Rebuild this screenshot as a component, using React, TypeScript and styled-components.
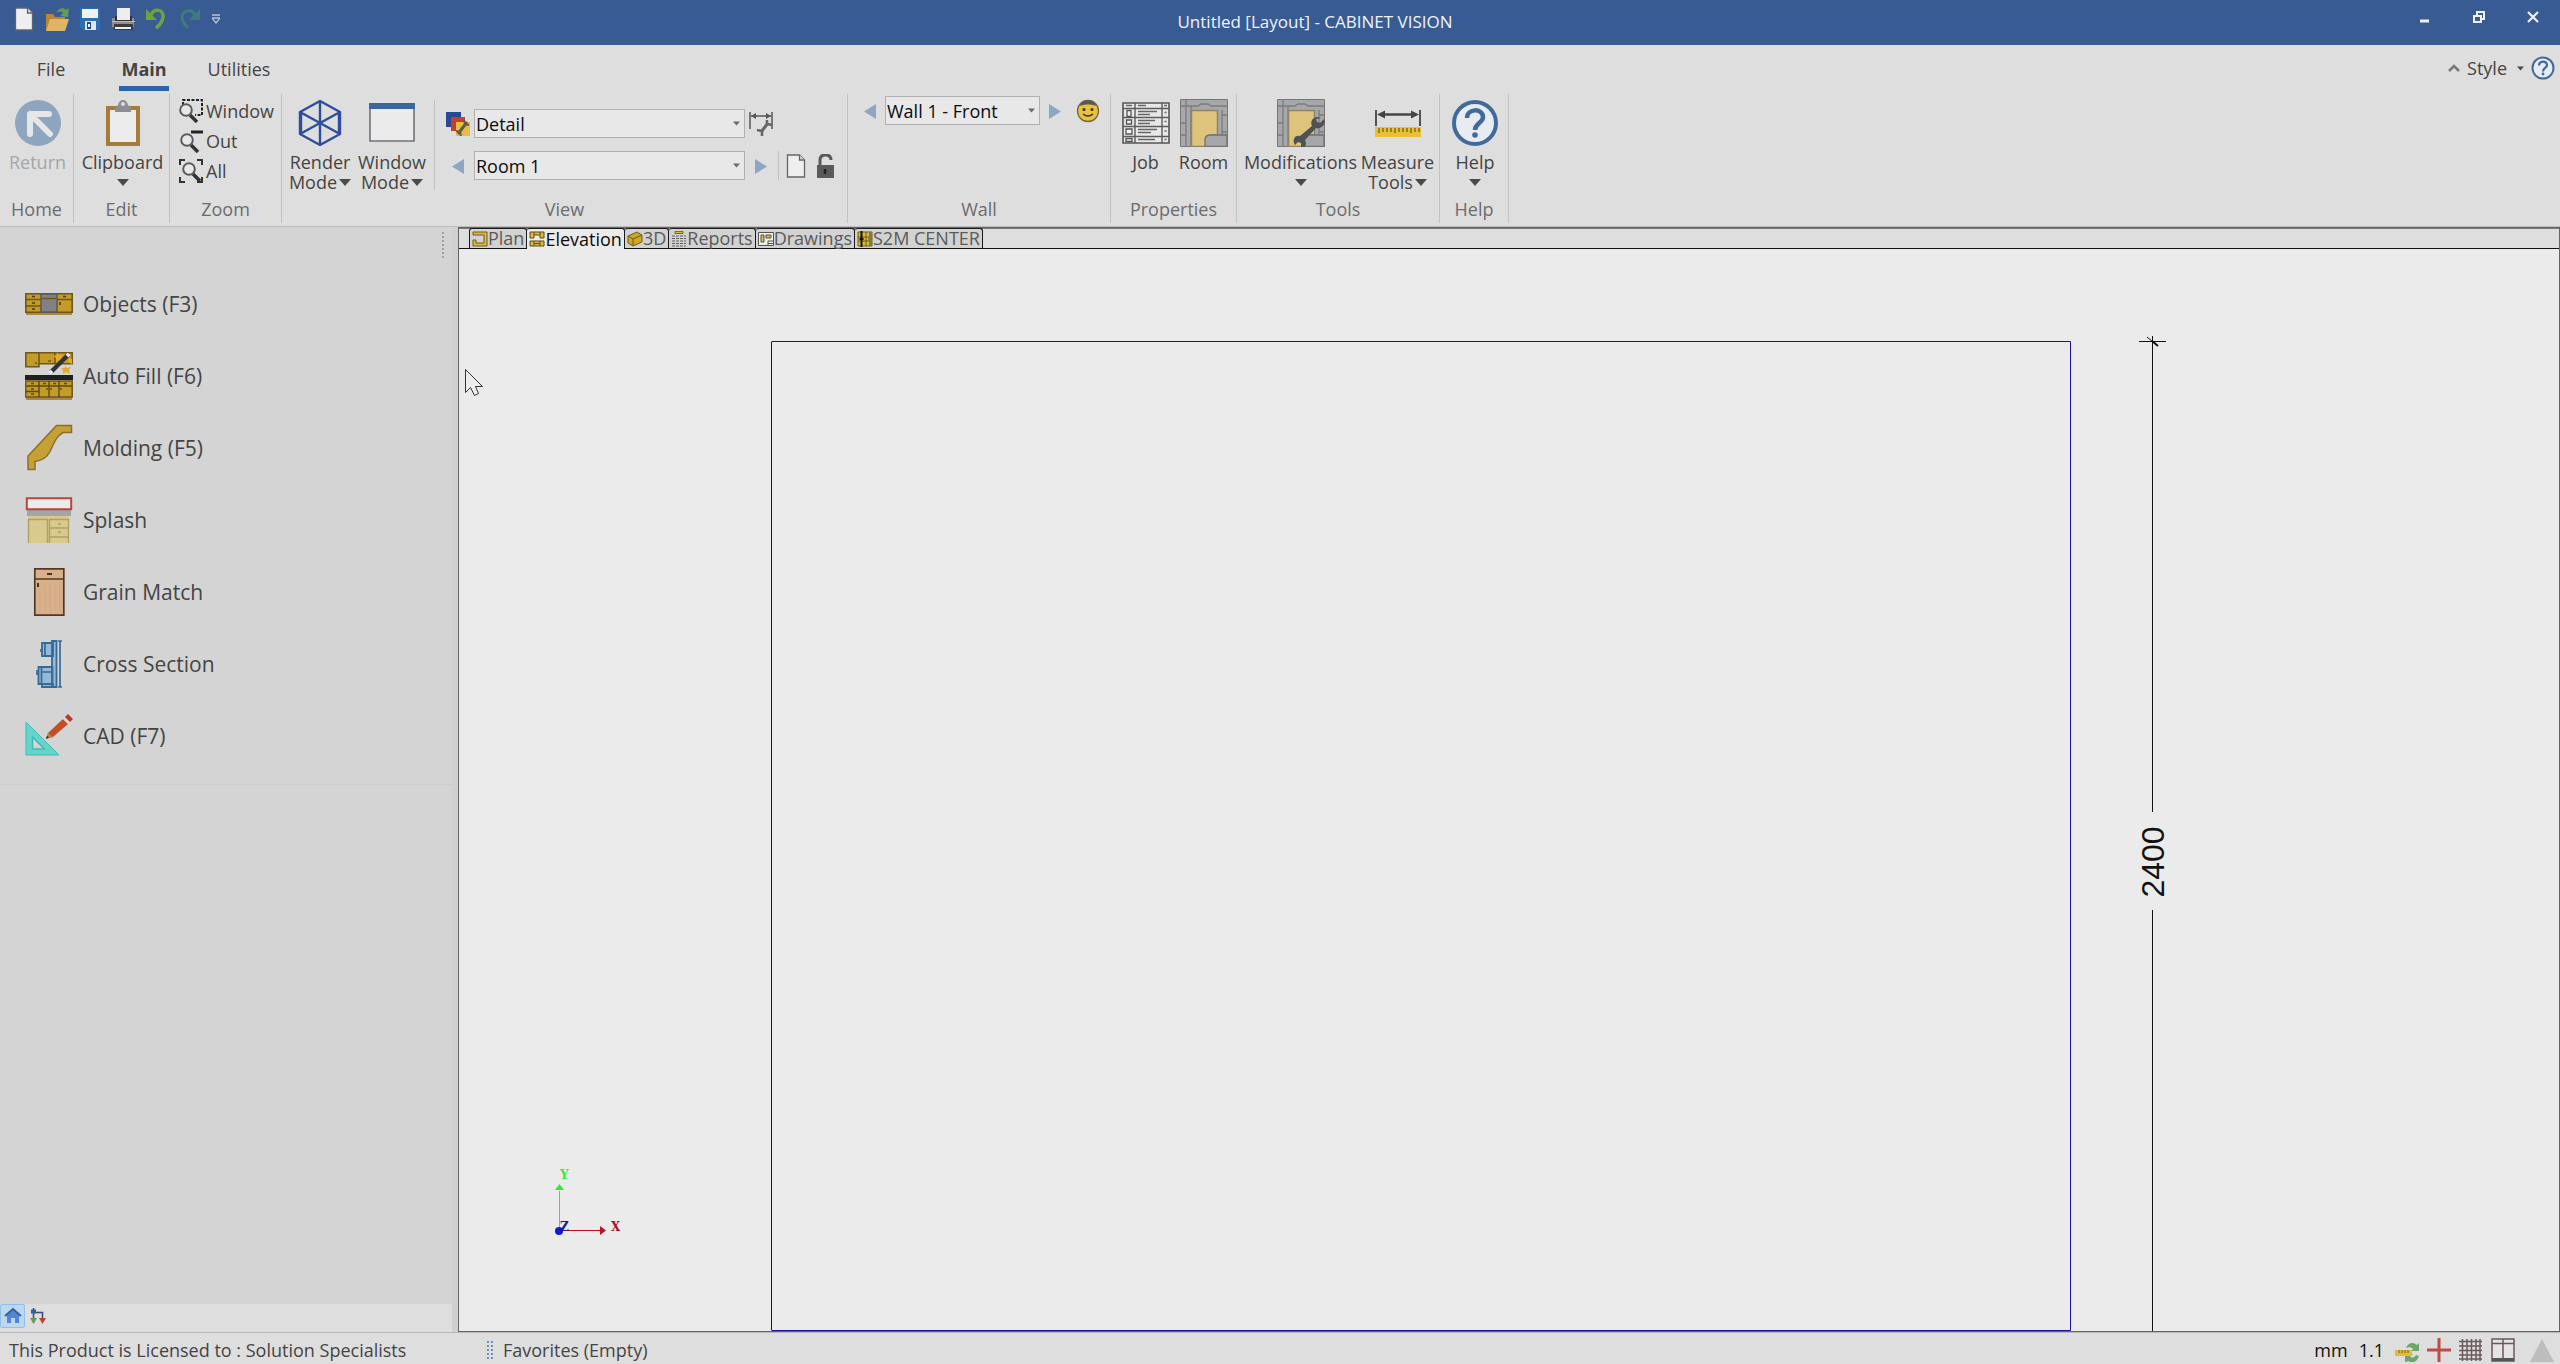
import React from "react";
import styled, { createGlobalStyle } from "styled-components";

const uiFont = '"Open Sans", "Noto Sans", sans-serif';

const GlobalStyle = createGlobalStyle`
  *, *::before, *::after { box-sizing: border-box; }
  body { margin: 0; background: #dedede; overflow: hidden; }
  button, select, a {
    font: inherit; color: inherit; margin: 0; padding: 0;
    border: 0; background: none; text-decoration: none;
  }
  svg { display: block; flex: none; }
`;

const Window = styled.div`
  display: flex;
  flex-direction: column;
  height: 100vh;
  font-family: ${uiFont};
  font-size: 18px;
  line-height: 20px;
  color: #444444;
  background: #dedede;
`;

/* ---------- title bar ---------- */

const TitleBar = styled.header`
  display: flex;
  height: 45px;
  background: #385b93;
  color: #f0f3f8;
`;

const QuickAccess = styled.div`
  display: flex;
  gap: 9px;
  padding: 7px 0 0 12px;
  align-items: flex-start;
`;

const IconButton = styled.button`
  display: flex;
  align-items: center;
  justify-content: center;
  min-width: ${(p: { $size?: number }) => p.$size ?? 24}px;
  height: ${(p) => p.$size ?? 24}px;
`;

const Overflow = styled(IconButton)`
  min-width: 12px;
  width: 12px;
`;

const Title = styled.h1`
  flex: 1;
  margin: 0;
  padding: 12px 0 0 10px;
  text-align: center;
  font-size: 17px;
  font-weight: 400;
  line-height: 20px;
`;

const WindowButtons = styled.div`
  display: flex;
  height: 34px;
  button { width: 54px; display: flex; align-items: center; justify-content: center; }
`;

/* ---------- ribbon ---------- */

const TabRow = styled.nav`
  display: flex;
  height: 46px;
  padding-left: 14px;
`;

const RibbonTab = styled.button<{ $active?: boolean; $width: number }>`
  width: ${(p) => p.$width}px;
  display: flex;
  justify-content: center;
  padding-top: 14px;
  font-weight: ${(p) => (p.$active ? 700 : 400)};
  span {
    height: 32px;
    padding: 0 2px;
    border-bottom: 5px solid ${(p) => (p.$active ? "#2a65ae" : "transparent")};
  }
`;

const TabRowEnd = styled.div`
  display: flex;
  align-items: center;
  margin-left: auto;
  padding: 0 5px 0 0;
  gap: 7px;
`;

const StyleMenu = styled.button`
  display: flex;
  align-items: center;
  gap: 10px;
`;

const Ribbon = styled.div`
  display: flex;
  height: 136px;
  padding: 3px 0;
  border-bottom: 1px solid #bdbdbd;
`;

const Group = styled.section<{ $width: number }>`
  display: flex;
  flex-direction: column;
  min-width: ${(p) => p.$width}px;
  border-right: 1px solid #c2c2c2;
`;

const GroupBody = styled.div<{ $gap?: number }>`
  flex: 1;
  display: flex;
  justify-content: center;
  gap: ${(p) => p.$gap ?? 0}px;
  padding-left: 2px;
`;

const GroupLabel = styled.h2`
  margin: 0 0 4px;
  text-align: center;
  font-size: 18px;
  line-height: 20px;
  font-weight: 400;
  color: #6c6c6c;
`;

const BigButton = styled.button<{ $width?: number; $muted?: boolean }>`
  display: flex;
  flex-direction: column;
  align-items: center;
  justify-content: flex-start;
  width: ${(p) => p.$width ?? 72}px;
  padding-top: 5px;
  white-space: nowrap;
  color: ${(p) => (p.$muted ? "#a4a6a8" : "inherit")};
`;

const BigLabel = styled.span`
  margin-top: 5px;
  text-align: center;
`;

const CaretLine = styled.span`
  display: flex;
  align-items: center;
  justify-content: center;
  gap: 2px;
  height: 20px;
`;

const ZoomColumn = styled.div`
  display: flex;
  flex-direction: column;
  align-items: flex-start;
  flex: 1;
  padding: 2px 0 0 9px;
`;

const SmallButton = styled.button`
  display: flex;
  align-items: center;
  gap: 3px;
  height: 30px;
`;

const ViewGrid = styled.div`
  display: flex;
  flex-direction: column;
  gap: 13px;
  flex: 1;
  margin-left: 6px;
  padding: 15px 0 0 12px;
  position: relative;
  &::before {
    content: "";
    position: absolute;
    left: 0; top: 6px;
    height: 90px;
    border-left: 1px solid #c2c2c2;
  }
`;

const ControlRow = styled.div`
  display: flex;
  align-items: center;
  gap: 4px;
  height: 29px;
`;

const WallRow = styled(ControlRow)`
  margin-top: 2px;
  gap: 5px;
`;

const StepButton = styled(IconButton)`
  min-width: 20px;
  width: 20px;
`;

const PersonButton = styled(IconButton)`
  margin-left: 6px;
`;

const VerticalRule = styled.i`
  height: 29px;
  margin: 0 1px;
  border-left: 1px solid #c2c2c2;
`;

const Combo = styled.label<{ $width: number }>`
  position: relative;
  display: block;
  width: ${(p) => p.$width}px;
  height: 29px;
  color: #0c0c0c;
  select {
    appearance: none;
    width: 100%;
    height: 100%;
    padding: 0 20px 0 1px;
    border: 1px solid #b0b0b0;
    background: #e8e8e8;
  }
  svg { position: absolute; right: 5px; top: 12px; pointer-events: none; }
`;

/* ---------- work area ---------- */

const Workspace = styled.div`
  flex: 1;
  display: flex;
  min-height: 0;
`;

const Sidebar = styled.aside`
  display: flex;
  flex-direction: column;
  width: 452px;
  background: #d4d4d4;
`;

const Divider = styled.div`
  width: 6px;
  background: #d0d0d0;
`;

const Grip = styled.div`
  align-self: flex-end;
  width: 2px;
  height: 26px;
  margin: 5px 8px 0 0;
  background: repeating-linear-gradient(#a4a4a4 0 2px, transparent 2px 4px);
`;

const ToolList = styled.ul`
  list-style: none;
  margin: 0;
  padding: 10px 0 12px;
  border-bottom: 1px solid #cdcdcd;
`;

const ToolButton = styled.button`
  display: flex;
  align-items: center;
  gap: 10px;
  width: 100%;
  height: 72px;
  padding-left: 25px;
  font-size: 21px;
  line-height: 24px;
`;

const SidebarTabs = styled.div`
  display: flex;
  align-items: flex-start;
  gap: 4px;
  height: 28px;
  margin-top: auto;
  background: #dedede;
`;

const SidebarTab = styled.button<{ $active?: boolean }>`
  display: flex;
  align-items: center;
  justify-content: center;
  width: ${(p) => (p.$active ? 25 : 18)}px;
  height: 24px;
  border: 1px solid ${(p) => (p.$active ? "#8fc0ea" : "transparent")};
  border-radius: 2px;
  background: ${(p) => (p.$active ? "#bcd7ee" : "transparent")};
`;

const Frame = styled.main`
  flex: 1;
  display: flex;
  flex-direction: column;
  min-width: 0;
  border: 1px solid #646464;
  background: #ebebeb;
`;

const ViewTabs = styled.div`
  display: flex;
  height: 21px;
  padding-left: 10px;
  background: #dedede;
  box-shadow: inset 0 -1px 0 #111, inset 0 1px 0 #777;
`;

const ViewTab = styled.button<{ $active?: boolean }>`
  display: flex;
  align-items: center;
  height: ${(p) => (p.$active ? 21 : 20)}px;
  padding: 0 2px;
  border: solid #1a1a1a;
  border-width: 1px 1px 0 0;
  border-radius: 3px 3px 0 0;
  &:first-child { border-left-width: 1px; }
  background: ${(p) => (p.$active ? "#ebebeb" : "#d2d2d2")};
  color: ${(p) => (p.$active ? "#0c0c0c" : "#5a5a5a")};
  line-height: 19px;
`;

const Canvas = styled.div`
  flex: 1;
  min-height: 0;
  overflow: hidden;
  svg { width: 100%; height: 100%; }
`;

/* ---------- status bar ---------- */

const StatusBar = styled.footer`
  display: flex;
  align-items: center;
  height: 32px;
  padding: 3px 6px 0 9px;
  border-top: 1px solid #b8b8b8;
`;

const License = styled.span`
  width: 478px;
`;

const DotGrip = styled.i`
  width: 6px;
  height: 18px;
  margin-right: 10px;
  background: radial-gradient(circle at 1px 1px, #6d8fc0 1px, transparent 1px) 0 0 / 4px 4px;
`;

const StatusTools = styled.div`
  display: flex;
  align-items: center;
  gap: 8px;
  margin-left: auto;
  color: #111;
`;

const Readout = styled.span`
  margin-right: 3px;
`;

const AlertButton = styled(IconButton)`
  margin-left: 7px;
`;

/* ---------- glyphs ---------- */

type IconProps = { w?: number; h?: number; box?: string; children: React.ReactNode };
const Icon = ({ w = 24, h = w, box, children }: IconProps) => (
  <svg width={w} height={h} viewBox={box ?? `0 0 ${w} ${h}`} fill="none" aria-hidden="true">
    {children}
  </svg>
);

const Caret = ({ w = 12, h = 7, fill = "#4a4a4a" }) => (
  <Icon w={w} h={h} box="0 0 12 7"><path d="M0 0h12L6 7z" fill={fill} /></Icon>
);

const ArrowGlyph = ({ right }: { right?: boolean }) => (
  <Icon w={20} h={24}>
    <path d={right ? "M4 5v15l12-7.500z" : "M16 5v15L4 12.500z"} fill="#8ea6c4" />
  </Icon>
);

const wrenchPath =
  "M44 19c-3-2-7-1-9 2-1 2-1 4 0 6L23 37c-3-1-5 0-6 3-1 2 0 4 1 6l3-3 3 1 0 4-2 2c4 1 7-2 7-6l-1-3 11-12c3 1 7-1 8-4 1-2 1-4 0-5l-4 4-3-1-1-3z";

const NewIcon = ({ stroke = "#5e6470" }) => (
  <Icon>
    <path d="M3.500 1h12l5 5v17h-17z" fill="#efefef" stroke={stroke} strokeWidth="1.300" />
    <path d="M15.500 1v5h5" fill="#dcdcdc" stroke={stroke} strokeWidth="1.300" />
  </Icon>
);

const OpenIcon = () => (
  <Icon>
    <path d="M1 23V7h7l2 3h10v3z" fill="#bb8634" />
    <path d="M1 24l4-12h19l-4 12z" fill="#dfb466" />
    <path d="M11 6c2-5 8-6 10-3l3-2-1 9-8-1 3-3c-2-2-5-1-7 0z" fill="#629a58" />
  </Icon>
);

const SaveIcon = () => (
  <Icon>
    <path d="M2 1h20v22H5l-3-3z" fill="#2d6db3" />
    <path d="M4 2h16v9H4z" fill="#f2f2f2" />
    <path d="M7 14h11v9H7z" fill="#dfe5ea" />
    <path d="M9 15h4v7H9z" fill="#1d4e8c" />
    <path d="M10 17h2v3h-2z" fill="#f2f2f2" />
  </Icon>
);

const PrintIcon = () => (
  <Icon>
    <path d="M1 11h22v9H1z" fill="#8e8e92" />
    <path d="M4 9h17v6H4z" fill="#333" />
    <path d="M6 1h13v12H6z" fill="#eee" />
    <path d="M3 17h19v6H3z" fill="#3c3c3e" />
    <path d="M4 20h16v2H4z" fill="#eee" />
    <path d="M1 14.500h23" stroke="#bbb" />
  </Icon>
);

const UndoIcon = () => (
  <Icon>
    <path d="M7 8c3-7 13-6 12 2-.5 4-3 8-7 11" stroke="#6da33f" strokeWidth="3.500" />
    <path d="M2 2v11h11z" fill="#6da33f" />
  </Icon>
);

const RedoIcon = () => (
  <Icon>
    <path d="M18 8C15 1 5 3 5 11c.5 4 3 7 6 10" stroke="#3e7c79" strokeWidth="3" />
    <path d="M23 2v11H12z" fill="#3e7c79" />
  </Icon>
);

const ReturnIcon = () => (
  <Icon w={48}>
    <circle cx="24" cy="24" r="23" fill="#8ea5bf" />
    <path d="M35 15H16v20M16 15l20 20" stroke="#e6e6e6" strokeWidth="6" strokeLinecap="round" strokeLinejoin="round" />
  </Icon>
);

const ClipboardIcon = () => (
  <Icon w={48}>
    <path d="M9 9h30v36H9z" fill="#ececec" stroke="#a67c3a" strokeWidth="4" />
    <path d="M16 13V9q0-2 3-2.500Q20 1 24 1t5 5.500Q32 7 32 9v4z" fill="#8c8c92" />
    <circle cx="24" cy="5" r="2" fill="#dedede" />
  </Icon>
);

const Magnifier = () => (
  <>
    <path d="M11 16l7 7" stroke="#333" strokeWidth="3.500" />
    <circle cx="7" cy="11" r="5.800" fill="#e8e8e8" stroke="#5b5b5b" strokeWidth="2" />
  </>
);

const ZoomWindowIcon = () => (
  <Icon>
    <path d="M4 6V1h19v15h-7" stroke="#222" strokeWidth="2" strokeDasharray="3 1.500" />
    <Magnifier />
  </Icon>
);

const ZoomOutIcon = () => (
  <Icon>
    <path d="M12 3h12" stroke="#222" strokeWidth="3" />
    <g transform="translate(1 0)"><Magnifier /></g>
  </Icon>
);

const ZoomAllIcon = () => (
  <Icon>
    <path d="M1 6V1h5M18 1h5v5M23 18v5h-5M6 23H1v-5" stroke="#333" strokeWidth="2" />
    <g transform="translate(3 -1)"><Magnifier /></g>
  </Icon>
);

const RenderIcon = () => (
  <Icon w={48}>
    <path
      d="M24 2l20 11v22L24 46 4 35V13zM24 2v22M4 13l20 11 20-11M24 22v24M4 35l20-11 20 11M5 14v20M43 14v20"
      stroke="#2e4d9b" strokeWidth="2.400" strokeLinejoin="round"
    />
  </Icon>
);

const WindowIcon = () => (
  <Icon w={48}>
    <path d="M2 5h44v37H2z" fill="#ebebeb" stroke="#6e7277" strokeWidth="1.600" />
    <path d="M1 4h46v6H1z" fill="#3c679c" />
  </Icon>
);

const LayersIcon = () => (
  <Icon>
    <path d="M0 0h15v15H0z" fill="#264a92" />
    <path d="M5 5h14v14H5z" fill="#c2402f" />
    <path d="M10 10h14v14H10z" fill="#e8bd43" />
    <path d="M12 22l9-12" stroke="#5f5c4e" strokeWidth="3" />
    <path d="M18 8l1 4 4 1M10 19l4 1 1 4" stroke="#5f5c4e" strokeWidth="2" />
  </Icon>
);

const DimensionIcon = () => (
  <Icon>
    <path d="M1 0v17M23 0v17M2 4h20" stroke="#555" strokeWidth="1.500" />
    <path d="M2 4l5-3v6zM22 4l-5-3v6z" fill="#555" />
    <path d="M12 20l7-9" stroke="#666" strokeWidth="3" />
    <path d="M18 8v4l5 1M8 18l5 1v5" stroke="#666" strokeWidth="2.600" />
  </Icon>
);

const LockIcon = () => (
  <Icon>
    <path d="M5 11h17v13H5z" fill="#5a5a5a" />
    <path d="M8 11V6q0-5 5.500-5T19 6" stroke="#5a5a5a" strokeWidth="3" />
    <path d="M13 15v5" stroke="#222" strokeWidth="2.500" />
  </Icon>
);

const SmileyIcon = () => (
  <Icon>
    <circle cx="12" cy="12" r="10.500" fill="#e9c13c" stroke="#77683a" strokeWidth="1.300" />
    <path d="M4 7c1-8 15-8 16 0-5-2-11-2-16 0z" fill="#5a5a55" />
    <circle cx="8" cy="10.500" r="1.500" fill="#333" />
    <circle cx="16" cy="10.500" r="1.500" fill="#333" />
    <path d="M7 15q5 4 10 0" stroke="#333" strokeWidth="1.400" />
  </Icon>
);

const JobIcon = () => (
  <Icon w={48}>
    <path d="M1 4h46v40H1z" fill="#e8e8e8" stroke="#555" strokeWidth="1.600" />
    <path d="M1 9.500h46M1 18.500h46M1 27.500h46M1 37.500h46M13 4v40M40 4v40" stroke="#5c5c5c" strokeWidth="1.400" />
    <path d="M4 6.500h6M16 6.500h8M42 6.500h3M16 12.500h19M16 15.500h12M16 21.500h17M16 24.500h12M16 30.500h19M16 33.500h13M16 40.500h17M42.500 13.500h2M42.500 22.500h2M42.500 32h2M42.500 40.500h2" stroke="#666" strokeWidth="1.400" />
    <path d="M5 11.500h4v6H5zM4.500 21h5v4h-5zM4 30h6v5H4zM4 39.500h6v3H4z" fill="#f2f2f2" stroke="#555" strokeWidth="1.300" />
  </Icon>
);

const RoomArt = () => (
  <>
    <path d="M.5.5h47v47H.5z" fill="#a6a7a8" stroke="#777" />
    <path d="M6 1v46M11 7v40M1 7h17l3-2h7l3 2h16M1 24h5M1 36h5M42 16h5M42 33h5M42 11v26" stroke="#7a7c7e" strokeWidth="1.300" />
    <path d="M11.500 11.500h26V36H30l-4 4v7.500H11.500z" fill="#dec37a" stroke="#8d8468" strokeWidth="1.500" />
    <path d="M37 36h10v11.500H25V40q1-4 5-4z" fill="#a6a7a8" stroke="#707274" strokeWidth="1.300" />
  </>
);
const RoomIcon = () => <Icon w={48}><RoomArt /></Icon>;
const ModificationsIcon = () => (
  <Icon w={48}>
    <RoomArt />
    <path d={wrenchPath} fill="#505154" />
  </Icon>
);

const MeasureIcon = () => (
  <Icon w={48}>
    <path d="M2 11v16M46 11v16" stroke="#444" strokeWidth="1.800" />
    <path d="M8 15.500h32" stroke="#444" strokeWidth="2.500" />
    <path d="M3 15.500l8-4v8zM45 15.500l-8-4v8z" fill="#444" />
    <path d="M1 28h46v10H1z" fill="#e9bf35" />
    <path d="M5 29v5M9 29v4M13 29v4M17 29v4M21 29v5M25 29v4M29 29v4M33 29v4M37 29v5M41 29v4M45 29v4" stroke="#8a6e1f" strokeWidth="1.600" />
  </Icon>
);

const HelpIcon = ({ size = 48 }) => (
  <Icon w={size} box="0 0 48 48">
    <circle cx="24" cy="24" r="21" fill="#e6ecf2" stroke="#416a9c" strokeWidth="4" />
    <path d="M16 19c0-10 16-10 16-1 0 6-8 6-8 13" stroke="#416a9c" strokeWidth="4.500" />
    <circle cx="24" cy="36" r="2.800" fill="#416a9c" />
  </Icon>
);

const ObjectsIcon = () => (
  <Icon w={48}>
    <path d="M1 32h46v3H1z" fill="#a98744" />
    <path d="M.8 13.800h46.400v18.400H.8z" fill="#c29c26" stroke="#70561b" strokeWidth="1.600" />
    <path d="M16 14h16v18H16z" fill="#808183" stroke="#5b5b5b" strokeWidth="1.600" />
    <path d="M17 18.500h14M1 19.500h15M1 26h15M32 19.500h15" stroke="#70561b" strokeWidth="1.500" />
    <path d="M7 16.500h3M7 23h3M7 29h3M38 16.500h3M35 22v3" stroke="#4b3b16" strokeWidth="1.600" />
  </Icon>
);

const AutoFillIcon = () => (
  <Icon w={48}>
    <path d="M.8.800h46.400v11H14v3H.800z" fill="#c29c26" stroke="#70561b" strokeWidth="1.500" />
    <path d="M14 1v11M30 1v11M11 10v2M23 9h3" stroke="#70561b" strokeWidth="1.500" />
    <path d="M0 23h48v5H0z" fill="#1c211f" />
    <path d="M1 45h46v3H1z" fill="#a98744" />
    <path d="M.8 29h46.400v16H.8z" fill="#c29c26" stroke="#70561b" strokeWidth="1.500" />
    <path d="M14 29v16M24 29v16M34 29v16M1 34h46M1 39.500h13M6 31.500h3M18 31.500h3M28 31.500h3M39 31.500h3M6 37h3M6 42h3M22 36v2M26 36v2M36 36v2" stroke="#5d4817" strokeWidth="1.400" />
    <path d="M32 0l2 3 4-1-2 4 2 3-4-1-3 2 0-4-3-2 4-1zM40 14l2 2 4-1-2 3 1 4-4-2-3 2 0-4-2-2 4 0zM44 6l3 1v5l-4-2z" fill="#e2aa28" />
    <path d="M26 20L43 3" stroke="#303336" strokeWidth="4.500" />
    <path d="M25 21l2-2M42 4l2-2" stroke="#f2f2f2" strokeWidth="3.500" />
  </Icon>
);

const MoldingIcon = () => (
  <Icon w={48}>
    <path d="M31.500 1.500h15v7H38c-7 4-9 11-13 19-3 6-9 9-15 10v8H3V32z" fill="#c5a036" stroke="#8e6f27" strokeWidth="1.500" />
  </Icon>
);

const SplashIcon = () => (
  <Icon w={48}>
    <path d="M2 14h44v6H2z" fill="#a5a4a7" />
    <path d="M3 20h41v27H3z" fill="#d8ca8f" />
    <path d="M3.500 23.500h19V47M3.500 23v24M24.500 23.500h19V47M24.500 23v24M24 32h20M24 41h20M33 28h3M33 36h3" stroke="#b29f62" strokeWidth="1.400" />
    <path d="M1.800 2.200h44.400v11H1.800z" fill="#ececec" stroke="#b9443e" strokeWidth="2" />
  </Icon>
);

const GrainIcon = () => (
  <Icon w={48}>
    <path d="M9.800.800h29v46.400h-29z" fill="#d9b08c" stroke="#553721" strokeWidth="1.700" />
    <path d="M10 11h29" stroke="#553721" strokeWidth="1.500" />
    <path d="M15 18v27M20 14v31M25 15v30M30 14v28M35 14v31" stroke="#d2a883" />
    <path d="M22 6h5M13 15v4" stroke="#4a3020" strokeWidth="2" />
  </Icon>
);

const CrossSectionIcon = () => (
  <Icon w={48}>
    <path d="M17 3h11v13H17zM13.500 27h14v17h-14zM17 44h11v3H17zM27 1h4.500v46H27z" fill="#91bad9" stroke="#396a94" strokeWidth="1.800" />
    <path d="M20 3v13M16.500 27v17M17 32h11M35 1v46M33 1h4M33 47h4M16 9v3M12 30v5" stroke="#396a94" strokeWidth="1.700" />
  </Icon>
);

const CadIcon = () => (
  <Icon w={48}>
    <path d="M1 10l33 33H1z" fill="#64d4cd" stroke="#42b9b2" />
    <path d="M7.500 25l12 12h-12z" fill="#d4d4d4" stroke="#42b9b2" strokeWidth="1.500" />
    <path d="M21 27l2-6 15-14 5 5-15 13z" fill="#c54d27" />
    <path d="M21 27l2-6 5 4z" fill="#b2894d" />
    <path d="M21 27l1-3 2 1z" fill="#222" />
    <path d="M38 7l2-2 5 5-2 2z" fill="#d9d5d2" />
    <path d="M40 5l3-3 5 5-3 3z" fill="#b63a2b" />
  </Icon>
);

const yellow = "#dcb93c";
const PlanTabIcon = () => (
  <Icon w={16}>
    <path d="M1 1h14v14H1V9h3v3h8V4H1z" fill={yellow} stroke="#6e5c1c" />
  </Icon>
);
const ElevationTabIcon = () => (
  <Icon w={16}>
    <path d="M1 7V1h14v6h-4V4H5v3zM1 10h14v5H1z" fill={yellow} stroke="#5c4d18" />
    <path d="M5 1v3M11 1v3M5 10v5M11 10v5M5 12.500h6" stroke="#5c4d18" />
  </Icon>
);
const CubeTabIcon = () => (
  <Icon w={16}>
    <path d="M1 5l9-4 5 3v7l-9 4-5-3z" fill="#cfa723" stroke="#6e5c1c" />
    <path d="M1 5l5 3 9-4M6 8v7" stroke="#6e5c1c" />
  </Icon>
);
const ReportsTabIcon = () => (
  <Icon w={16}>
    <path d="M4 .5h8v2H4z" fill={yellow} stroke="#7a6a30" />
    <path d="M1 5h14M1 7.500h14M1 10h14M1 12.500h14M1 15h14" stroke="#606060" strokeDasharray="3 1" />
  </Icon>
);
const DrawingsTabIcon = () => (
  <Icon w={16}>
    <path d="M.5 1.500h15v13H.5z" fill="#eee" stroke="#555" />
    <path d="M3 4h3v7H3zM8 4h5v3H8z" fill={yellow} stroke="#555" />
    <path d="M10 10h5M10 12.500h5M10 10v4" stroke="#555" />
  </Icon>
);
const CenterTabIcon = () => (
  <Icon w={16}>
    <path d="M1 1h14v14H1z" fill={yellow} stroke="#6e5c1c" />
    <path d="M1 6h14M1 10h14M9 1v14M12 6v4" stroke="#6e5c1c" />
    <path d="M12 1h3v14h-3z" fill="#76803c" />
    <path d="M4.500 0v16M2.500 8h4" stroke="#111" strokeWidth="2" />
  </Icon>
);

const HomeIcon = () => (
  <Icon w={18}>
    <path d="M3 8v8h4v-5h4v5h4V8L9 3z" fill="#5085d9" />
    <path d="M1 9l8-7 8 7" stroke="#315f9f" strokeWidth="2" />
  </Icon>
);
const TreeIcon = () => (
  <Icon w={16} h={18}>
    <path d="M3.500 1v15M3.500 5.500h9V15" stroke="#364d70" strokeWidth="1.500" />
    <path d="M1 4.500h5" stroke="#365f9f" strokeWidth="4" />
    <path d="M0 11h7l-3.500 6z" fill="#6a9a55" />
    <path d="M9 11h7l-3.500 6z" fill="#c1402f" />
  </Icon>
);

const RulerRefreshIcon = () => (
  <Icon>
    <path d="M11 10c2-6 8-6 11-3l2-2v8h-8l2-2c-2-2-4-2-7-1zM24 18c-2 7-8 7-11 5l-3 2v-9h8l-3 3c3 1 5 0 6-2z" fill="#6da66d" />
    <path d="M0 12h17v6H0z" fill="#e2bc37" />
    <path d="M4 12v3M7 12v3M10 12v3M13 12v3" stroke="#6f5c20" />
  </Icon>
);
const CrosshairIcon = () => (
  <Icon><path d="M12 0v24M0 12h24" stroke="#c24a42" strokeWidth="3" /></Icon>
);
const GridIcon = () => (
  <Icon>
    <path d="M3.500 1v22M8 1v22M12.500 1v22M17 1v22M21 1v22M0 3.500h23M0 8h23M0 12.500h23M0 17h23M0 21h23" stroke="#6a5a5e" strokeWidth="1.500" />
  </Icon>
);
const PanelIcon = () => (
  <Icon>
    <path d="M1 1h22v22H1z" fill="#e4e4e4" stroke="#6b5558" strokeWidth="1.500" />
    <path d="M1 5.500h22M12 1v20" stroke="#6b5558" strokeWidth="1.500" />
    <path d="M1 20h22v3H1z" fill="#55565a" />
  </Icon>
);
const TriangleIcon = () => <Icon><path d="M12 1l12 23H0z" fill="#bdbdbd" /></Icon>;

/* ---------- parts ---------- */

function Select({ label, value, width }: { label: string; value: string; width: number }) {
  return (
    <Combo $width={width}>
      <select aria-label={label} defaultValue={value}>
        <option>{value}</option>
      </select>
      <Caret w={7} h={5} fill="#6a6a6a" />
    </Combo>
  );
}

type BigProps = {
  icon: React.ReactNode;
  lines: string[];
  width?: number;
  caret?: "below" | "inline";
  muted?: boolean;
};

function Big({ icon, lines, width, caret, muted }: BigProps) {
  return (
    <BigButton $width={width} $muted={muted} disabled={muted}>
      {icon}
      <BigLabel>{lines[0]}</BigLabel>
      {caret && (
        <CaretLine>
          {lines[1]}
          <Caret />
        </CaretLine>
      )}
    </BigButton>
  );
}

const tools: [string, React.ReactNode][] = [
  ["Objects (F3)", <ObjectsIcon />],
  ["Auto Fill (F6)", <AutoFillIcon />],
  ["Molding (F5)", <MoldingIcon />],
  ["Splash", <SplashIcon />],
  ["Grain Match", <GrainIcon />],
  ["Cross Section", <CrossSectionIcon />],
  ["CAD (F7)", <CadIcon />],
];

const views: [string, React.ReactNode][] = [
  ["Plan", <PlanTabIcon />],
  ["Elevation", <ElevationTabIcon />],
  ["3D", <CubeTabIcon />],
  ["Reports", <ReportsTabIcon />],
  ["Drawings", <DrawingsTabIcon />],
  ["S2M CENTER", <CenterTabIcon />],
];

function ElevationDrawing() {
  return (
    <svg role="img" aria-label="Wall 1 front elevation" fill="none">
      {/* wall outline */}
      <path d="M312.500 92.500h1299v989h-1299" stroke="#1c0ea0" />
      <path d="M312.500 1081v-988" stroke="#1a1a1a" />
      {/* height dimension */}
      <path d="M1680 92.500h27M1693.500 87v476M1693.500 661v430" stroke="#111" />
      <path d="M1688 88l6 5" stroke="#111" />
      <path d="M1693 92l6 5" stroke="#111" strokeWidth="2" />
      <text
        transform="translate(1705 613) rotate(-90)"
        textAnchor="middle" fill="#111" fontSize="32"
        fontFamily='"Liberation Sans", Arial, sans-serif'
      >
        2400
      </text>
      {/* axis marker */}
      <path d="M100.500 942v38" stroke="#a0a0a0" />
      <path d="M96 941h9l-4.500-6z" fill="#35e835" />
      <path d="M101 981.500h42" stroke="#c01020" />
      <path d="M141 977v9l6-4.500z" fill="#c01020" />
      <circle cx="100" cy="982" r="4" fill="#1616d6" />
      <g fontFamily='"DejaVu Serif", serif' fontSize="12" fontWeight="700">
        <text x="101" y="930" fill="#35e835">Y</text>
        <text x="101" y="982" fill="#1616a6">Z</text>
        <text x="152" y="982" fill="#b01020">X</text>
      </g>
      {/* pointer */}
      <path d="M6.500 120.500v23l5-5 4 8 4-2-3-7h7z" fill="#ededed" stroke="#333" />
    </svg>
  );
}

export default function App() {
  return (
    <>
      <GlobalStyle />
      <Window>
        <TitleBar>
          <QuickAccess>
            <IconButton aria-label="New"><NewIcon /></IconButton>
            <IconButton aria-label="Open"><OpenIcon /></IconButton>
            <IconButton aria-label="Save"><SaveIcon /></IconButton>
            <IconButton aria-label="Print"><PrintIcon /></IconButton>
            <IconButton aria-label="Undo"><UndoIcon /></IconButton>
            <IconButton aria-label="Redo"><RedoIcon /></IconButton>
            <Overflow aria-label="Customize">
              <Icon w={8} h={10}>
                <path d="M0 1h8M0 4h8L4 9z" stroke="#b9c3d4" strokeWidth="1.300" />
              </Icon>
            </Overflow>
          </QuickAccess>
          <Title>Untitled [Layout] - CABINET VISION</Title>
          <WindowButtons>
            <button aria-label="Minimize">
              <Icon w={12}><path d="M1 10h9" stroke="#eef2f8" strokeWidth="3" /></Icon>
            </button>
            <button aria-label="Restore">
              <Icon w={12}>
                <path d="M4 4V1h7v7H8" stroke="#eef2f8" strokeWidth="2" />
                <path d="M1 5h7v6H1z" stroke="#eef2f8" strokeWidth="2" />
              </Icon>
            </button>
            <button aria-label="Close">
              <Icon w={12}><path d="M1 1l10 10M11 1L1 11" stroke="#eef2f8" strokeWidth="2.200" /></Icon>
            </button>
          </WindowButtons>
        </TitleBar>

        <TabRow>
          <RibbonTab $width={74}><span>File</span></RibbonTab>
          <RibbonTab $width={112} $active><span>Main</span></RibbonTab>
          <RibbonTab $width={78}><span>Utilities</span></RibbonTab>
          <TabRowEnd>
            <IconButton $size={12} aria-label="Collapse ribbon">
              <Icon w={12}><path d="M1 9l5-5 5 5" stroke="#777" strokeWidth="2.500" /></Icon>
            </IconButton>
            <StyleMenu>Style <Caret w={7} h={5} /></StyleMenu>
            <IconButton aria-label="Help"><HelpIcon size={24} /></IconButton>
          </TabRowEnd>
        </TabRow>

        <Ribbon>
          <Group $width={74}>
            <GroupBody><Big icon={<ReturnIcon />} lines={["Return"]} width={70} muted /></GroupBody>
            <GroupLabel>Home</GroupLabel>
          </Group>
          <Group $width={96}>
            <GroupBody><Big icon={<ClipboardIcon />} lines={["Clipboard"]} width={84} caret="below" /></GroupBody>
            <GroupLabel>Edit</GroupLabel>
          </Group>
          <Group $width={112}>
            <ZoomColumn>
              <SmallButton><ZoomWindowIcon />Window</SmallButton>
              <SmallButton><ZoomOutIcon />Out</SmallButton>
              <SmallButton><ZoomAllIcon />All</SmallButton>
            </ZoomColumn>
            <GroupLabel>Zoom</GroupLabel>
          </Group>
          <Group $width={566}>
            <GroupBody>
              <Big icon={<RenderIcon />} lines={["Render", "Mode"]} width={72} caret="inline" />
              <Big icon={<WindowIcon />} lines={["Window", "Mode"]} width={72} caret="inline" />
              <ViewGrid>
                <ControlRow>
                  <IconButton aria-label="Layers"><LayersIcon /></IconButton>
                  <Select label="Detail level" value="Detail" width={271} />
                  <IconButton aria-label="Dimension setup"><DimensionIcon /></IconButton>
                </ControlRow>
                <ControlRow>
                  <IconButton aria-label="Previous room"><ArrowGlyph /></IconButton>
                  <Select label="Room" value="Room 1" width={271} />
                  <IconButton aria-label="Next room"><ArrowGlyph right /></IconButton>
                  <VerticalRule />
                  <IconButton aria-label="New room"><NewIcon stroke="#666" /></IconButton>
                  <IconButton aria-label="Unlock"><LockIcon /></IconButton>
                </ControlRow>
              </ViewGrid>
            </GroupBody>
            <GroupLabel>View</GroupLabel>
          </Group>
          <Group $width={263}>
            <GroupBody>
              <WallRow>
                <StepButton aria-label="Previous wall"><ArrowGlyph /></StepButton>
                <Select label="Wall" value="Wall 1 - Front" width={155} />
                <StepButton aria-label="Next wall"><ArrowGlyph right /></StepButton>
                <PersonButton aria-label="View from person"><SmileyIcon /></PersonButton>
              </WallRow>
            </GroupBody>
            <GroupLabel>Wall</GroupLabel>
          </Group>
          <Group $width={126}>
            <GroupBody>
              <Big icon={<JobIcon />} lines={["Job"]} width={58} />
              <Big icon={<RoomIcon />} lines={["Room"]} width={58} />
            </GroupBody>
            <GroupLabel>Properties</GroupLabel>
          </Group>
          <Group $width={203}>
            <GroupBody $gap={3}>
              <Big icon={<ModificationsIcon />} lines={["Modifications"]} width={114} caret="below" />
              <Big icon={<MeasureIcon />} lines={["Measure", "Tools"]} width={74} caret="inline" />
            </GroupBody>
            <GroupLabel>Tools</GroupLabel>
          </Group>
          <Group $width={69}>
            <GroupBody><Big icon={<HelpIcon />} lines={["Help"]} width={60} caret="below" /></GroupBody>
            <GroupLabel>Help</GroupLabel>
          </Group>
        </Ribbon>

        <Workspace>
          <Sidebar>
            <Grip />
            <ToolList>
              {tools.map(([name, icon]) => (
                <li key={name}><ToolButton>{icon}{name}</ToolButton></li>
              ))}
            </ToolList>
            <SidebarTabs>
              <SidebarTab $active aria-label="Home"><HomeIcon /></SidebarTab>
              <SidebarTab aria-label="Object tree"><TreeIcon /></SidebarTab>
            </SidebarTabs>
          </Sidebar>
          <Divider />
          <Frame>
            <ViewTabs>
              {views.map(([name, icon]) => (
                <ViewTab key={name} $active={name === "Elevation"}>{icon}{name}</ViewTab>
              ))}
            </ViewTabs>
            <Canvas><ElevationDrawing /></Canvas>
          </Frame>
        </Workspace>

        <StatusBar>
          <License>This Product is Licensed to : Solution Specialists</License>
          <DotGrip />
          <span>Favorites (Empty)</span>
          <StatusTools>
            <Readout>mm</Readout>
            <Readout>1.1</Readout>
            <IconButton aria-label="Convert units"><RulerRefreshIcon /></IconButton>
            <IconButton aria-label="Crosshair"><CrosshairIcon /></IconButton>
            <IconButton aria-label="Grid"><GridIcon /></IconButton>
            <IconButton aria-label="Panels"><PanelIcon /></IconButton>
            <AlertButton aria-label="Alerts"><TriangleIcon /></AlertButton>
          </StatusTools>
        </StatusBar>
      </Window>
    </>
  );
}
